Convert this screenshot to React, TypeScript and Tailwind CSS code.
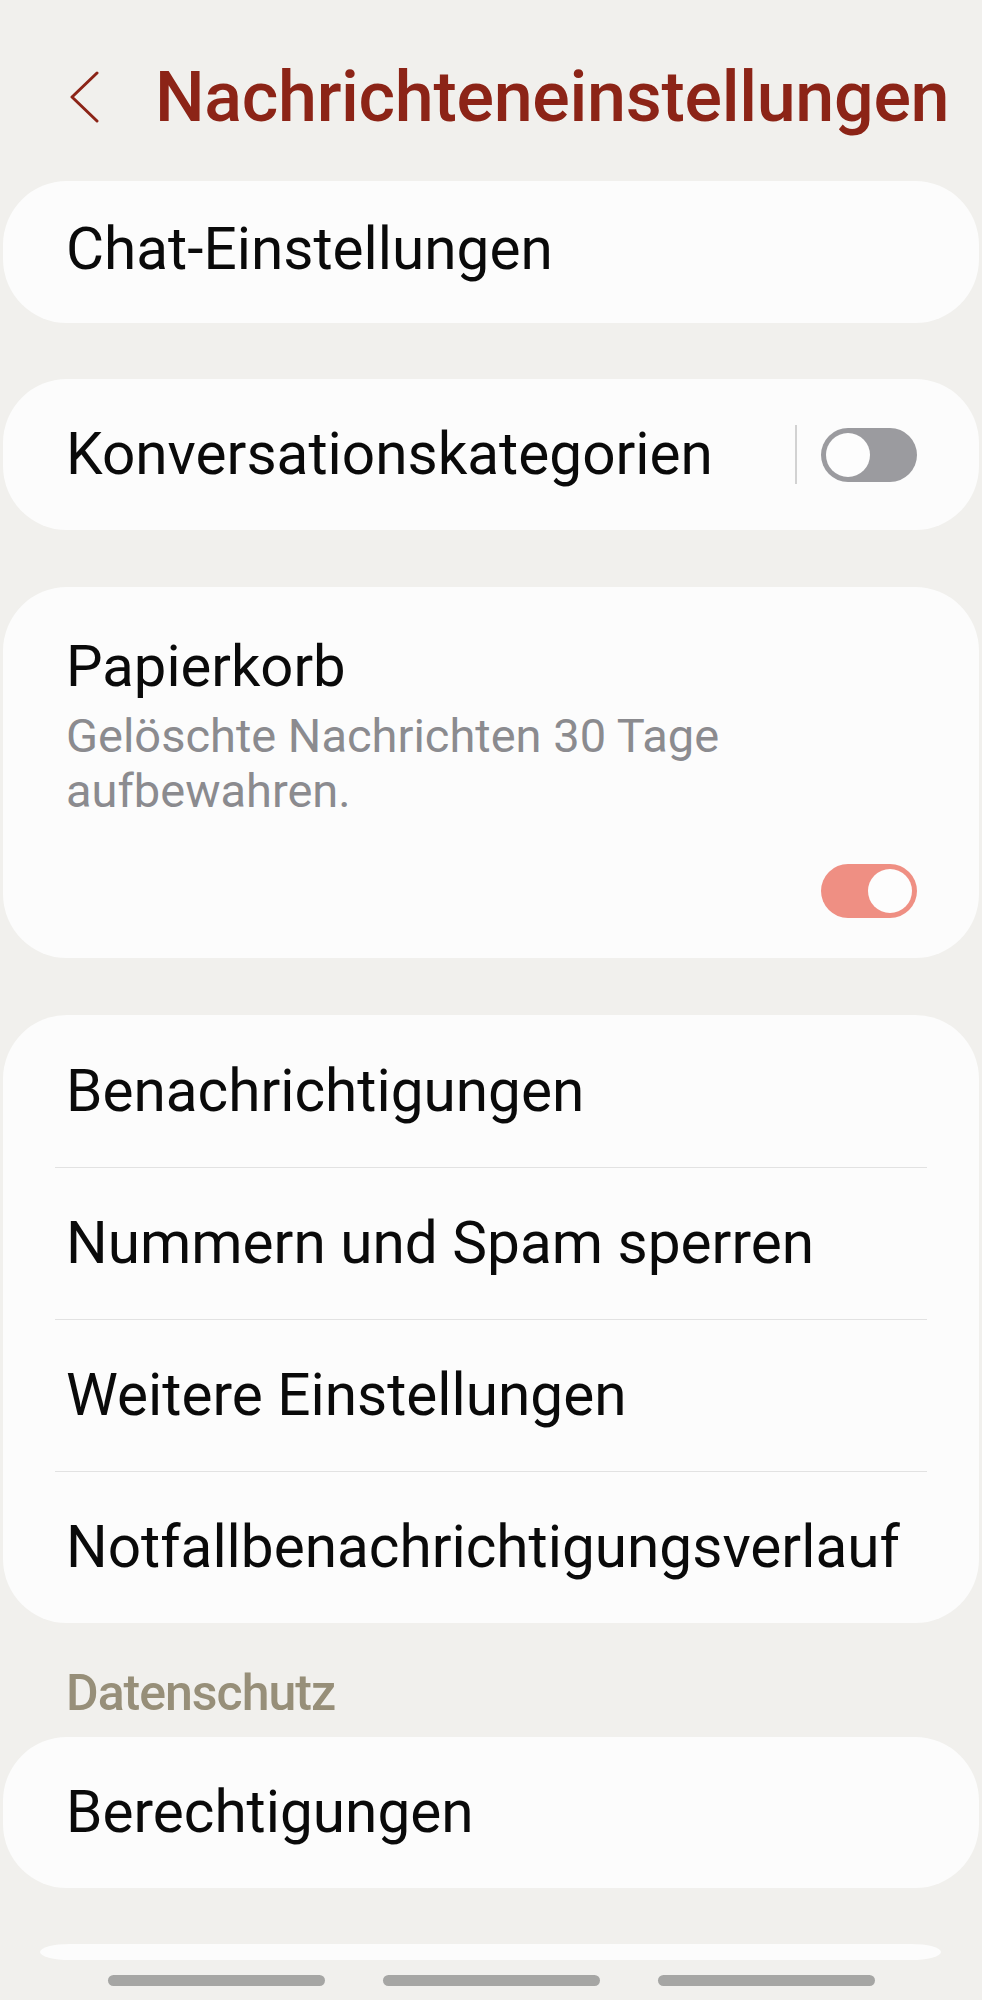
import React from "react";

function Toggle({ on }: { on: boolean }) {
  return (
    <div
      className={
        "w-[96px] h-[54px] rounded-full flex items-center px-[5px] " +
        (on ? "bg-[#ef8f83] justify-end" : "bg-[#9b9b9f] justify-start")
      }
    >
      <span className="w-[44px] h-[44px] rounded-full bg-[#fdfdfd]"></span>
    </div>
  );
}

function Row({ label, h }: { label: string; h: string }) {
  return (
    <div className={"flex items-center pl-[63px] pr-[62px] " + h}>
      <span className="text-[58.5px] leading-none text-[#0a0a0a]">{label}</span>
    </div>
  );
}

function Divider() {
  return <div className="h-px mx-[52px] bg-[#e2e2e2]"></div>;
}

export default function App() {
  return (
    <div className="w-[982px] min-h-[2000px] bg-[#f1f0ed] font-['Roboto',sans-serif] flex flex-col">
      {/* header */}
      <div className="h-[181px] flex items-center pt-[12px]">
        <svg className="ml-[70px] w-[30px] h-[52px]" viewBox="0 0 30 52" fill="none">
          <path d="M27 2 L2 26 L27 50" stroke="#8c2417" strokeWidth="3" strokeLinecap="round" strokeLinejoin="round" />
        </svg>
        <h1 className="ml-[55px] text-[70px] leading-none font-medium text-[#8c2417] tracking-[-0.3px]">
          Nachrichteneinstellungen
        </h1>
      </div>

      <div className="mx-[3px] bg-[#fcfcfc] rounded-[64px]">
        <Row label="Chat-Einstellungen" h="h-[142px] pb-[6px]" />
      </div>

      <div className="mx-[3px] mt-[56px] bg-[#fcfcfc] rounded-[64px] h-[151px] flex items-center pl-[63px] pr-[62px]">
        <span className="flex-1 text-[58.5px] leading-none text-[#0a0a0a]">Konversationskategorien</span>
        <div className="w-[2px] h-[59px] bg-[#d2d2d2] mr-[24px]"></div>
        <Toggle on={false} />
      </div>

      <div className="mx-[3px] mt-[57px] bg-[#fcfcfc] rounded-[64px] pl-[63px] pr-[62px] pt-[50px] pb-[40px] flex flex-col">
        <span className="text-[58px] leading-none text-[#0a0a0a]">Papierkorb</span>
        <p className="mt-[13px] text-[47px] leading-[55px] text-[#8b8b8f] w-[700px]">
          Gelöschte Nachrichten 30 Tage aufbewahren.
        </p>
        <div className="mt-[46px] flex justify-end">
          <Toggle on={true} />
        </div>
      </div>

      <div className="mx-[3px] mt-[57px] bg-[#fcfcfc] rounded-[64px] flex flex-col">
        <Row label="Benachrichtigungen" h="h-[152px]" />
        <Divider />
        <Row label="Nummern und Spam sperren" h="h-[151px]" />
        <Divider />
        <Row label="Weitere Einstellungen" h="h-[151px]" />
        <Divider />
        <Row label="Notfallbenachrichtigungsverlauf" h="h-[151px]" />
      </div>

      <div className="mt-[45px] pl-[66px] text-[50px] leading-none font-medium text-[#978f79] tracking-[-1px]">
        Datenschutz
      </div>

      <div className="mx-[3px] mt-[19px] bg-[#fcfcfc] rounded-[64px]">
        <Row label="Berechtigungen" h="h-[151px]" />
      </div>

      <div className="mt-[56px] ml-[40px] mr-[41px] h-[16px] bg-[#fcfcfc] rounded-[30px/8px]"></div>

      <div className="mt-[15px] flex justify-center gap-[58px]">
        <span className="w-[217px] h-[11px] rounded-full bg-[#a6a6a4]"></span>
        <span className="w-[217px] h-[11px] rounded-full bg-[#a6a6a4]"></span>
        <span className="w-[217px] h-[11px] rounded-full bg-[#a6a6a4]"></span>
      </div>
    </div>
  );
}
